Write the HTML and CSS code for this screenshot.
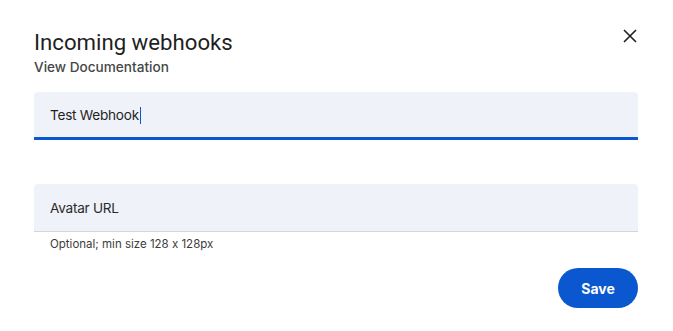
FILE: index.html
```html
<!DOCTYPE html>
<html>
<head>
<meta charset="utf-8">
<link rel="stylesheet" href="styles.css">
</head>
<body>
<div class="dialog">
  <div class="header">
    <div class="titles">
      <h1 class="title">Incoming webhooks</h1>
      <a class="doc-link">View Documentation</a>
    </div>
    <button class="close" aria-label="Close">
      <svg width="14" height="14" viewBox="0 0 14 14"><path d="M1 1L13 13M13 1L1 13" stroke="#1f1f1f" stroke-width="1.6" fill="none"/></svg>
    </button>
  </div>
  <div class="field field-active">
    <span class="field-text">Test Webhook</span><span class="caret"></span>
  </div>
  <div class="field field-second">
    <span class="field-text">Avatar URL</span>
  </div>
  <div class="helper">Optional; min size 128 x 128px</div>
  <div class="actions">
    <button class="save">Save</button>
  </div>
</div>
</body>
</html>
```

FILE: styles.css
```css
html, body {
  margin: 0;
  padding: 0;
  background: #ffffff;
}
body {
  font-family: Inter, "Liberation Sans", sans-serif;
  font-feature-settings: "calt" 0;
  color: #1f1f1f;
}
.dialog {
  width: 604px;
  padding: 28px 35px 0 34px;
}
.header {
  display: flex;
  justify-content: space-between;
  align-items: flex-start;
}
.titles {
  display: flex;
  flex-direction: column;
}
.title {
  margin: 0;
  font-family: Roboto, "Liberation Sans", sans-serif;
  font-size: 22.2px;
  font-weight: 400;
  line-height: 28px;
  color: #1f1f1f;
}
.doc-link {
  font-size: 13.6px;
  font-weight: 500;
  line-height: 20px;
  color: #444746;
  margin-top: 1px;
}
.close {
  border: none;
  background: none;
  padding: 0;
  margin-top: 1px;
  margin-right: 1px;
  width: 14px;
  height: 14px;
  display: flex;
}
.field {
  height: 48px;
  box-sizing: border-box;
  background: #eff2f9;
  border-radius: 4px 4px 0 0;
  display: flex;
  align-items: center;
  padding-left: 16px;
  font-size: 13.6px;
  letter-spacing: -0.25px;
  color: #1f1f1f;
}
.field-active {
  margin-top: 15px;
  border-bottom: 3px solid #0b57d0;
  padding-top: 1px;
}
.field-second {
  margin-top: 44px;
  border-bottom: 1px solid #d3d6dc;
  color: #2b2b2b;
}
.field-text {
  line-height: 20px;
}
.caret {
  display: inline-block;
  width: 1px;
  height: 17px;
  margin-left: 1px;
  background: #0b57d0;
}
.helper {
  font-size: 11.5px;
  line-height: 16px;
  color: #3c3c3c;
  padding-left: 16px;
  margin-top: 4px;
}
.actions {
  display: flex;
  justify-content: flex-end;
  margin-top: 16px;
}
.save {
  width: 80px;
  height: 40px;
  border: none;
  border-radius: 20px;
  background: #0b57d0;
  color: #ffffff;
  font-family: Inter, "Liberation Sans", sans-serif;
  font-size: 14px;
  font-weight: 700;
}
```
